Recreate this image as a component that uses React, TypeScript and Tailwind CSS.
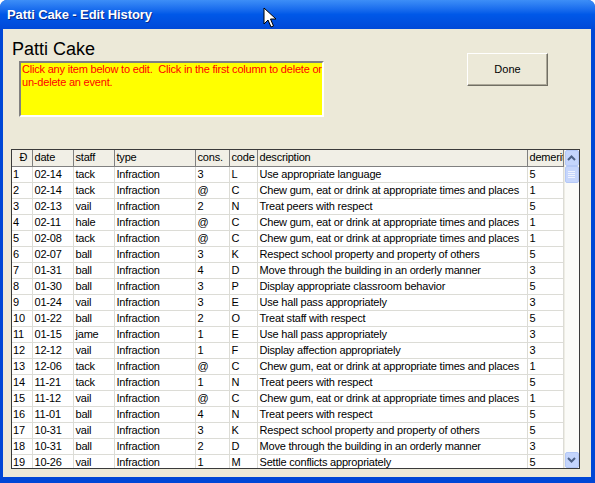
const rows: string[][] = [
  ["1", "02-14", "tack", "Infraction", "3", "L", "Use appropriate language", "5"],
  ["2", "02-14", "tack", "Infraction", "@", "C", "Chew gum, eat or drink at appropriate times and places", "1"],
  ["3", "02-13", "vail", "Infraction", "2", "N", "Treat peers with respect", "5"],
  ["4", "02-11", "hale", "Infraction", "@", "C", "Chew gum, eat or drink at appropriate times and places", "1"],
  ["5", "02-08", "tack", "Infraction", "@", "C", "Chew gum, eat or drink at appropriate times and places", "1"],
  ["6", "02-07", "ball", "Infraction", "3", "K", "Respect school property and property of others", "5"],
  ["7", "01-31", "ball", "Infraction", "4", "D", "Move through the building in an orderly manner", "3"],
  ["8", "01-30", "ball", "Infraction", "3", "P", "Display appropriate classroom behavior", "5"],
  ["9", "01-24", "vail", "Infraction", "3", "E", "Use hall pass appropriately", "3"],
  ["10", "01-22", "ball", "Infraction", "2", "O", "Treat staff with respect", "5"],
  ["11", "01-15", "jame", "Infraction", "1", "E", "Use hall pass appropriately", "3"],
  ["12", "12-12", "vail", "Infraction", "1", "F", "Display affection appropriately", "3"],
  ["13", "12-06", "tack", "Infraction", "@", "C", "Chew gum, eat or drink at appropriate times and places", "1"],
  ["14", "11-21", "tack", "Infraction", "1", "N", "Treat peers with respect", "5"],
  ["15", "11-12", "vail", "Infraction", "@", "C", "Chew gum, eat or drink at appropriate times and places", "1"],
  ["16", "11-01", "ball", "Infraction", "4", "N", "Treat peers with respect", "5"],
  ["17", "10-31", "vail", "Infraction", "3", "K", "Respect school property and property of others", "5"],
  ["18", "10-31", "ball", "Infraction", "2", "D", "Move through the building in an orderly manner", "3"],
  ["19", "10-26", "vail", "Infraction", "1", "M", "Settle conflicts appropriately", "5"],
];

const headers = ["Đ", "date", "staff", "type", "cons.", "code", "description", "demerits"];
const widths = [20, 41, 41, 81, 34, 28, 270, 36];

function Arrow({ down }: { down?: boolean }) {
  return (
    <svg width="9" height="6" viewBox="0 0 9 6" className={down ? "rotate-180" : ""}>
      <path d="M1 5 L4.5 1.5 L8 5" fill="none" stroke="#4d6185" strokeWidth="2" />
    </svg>
  );
}

export default function App() {
  return (
    <div
      className="relative w-[595px] h-[483px] flex flex-col rounded-t-[7px] bg-[#0047d6] overflow-hidden"
      style={{ fontFamily: '"Liberation Sans", Arial, sans-serif' }}
    >
      {/* title bar */}
      <div className="h-[29px] flex items-center pl-[7px] bg-gradient-to-b from-[#3d8ef7] via-[#0058e8] to-[#0049d8]">
        <span className="text-white font-bold text-[13px] tracking-[-0.1px] [text-shadow:1px_1px_0_#0a2a8a]">
          Patti Cake - Edit History
        </span>
      </div>

      {/* cursor */}
      <svg className="absolute left-[263px] top-[7px]" width="14" height="22" viewBox="0 0 14 22">
        <path d="M1 1 L1 17 L5 13 L8 20 L10.5 19 L7.5 12 L13 12 Z" fill="#fff" stroke="#000" strokeWidth="1" />
      </svg>

      {/* body */}
      <div className="flex-1 ml-[3px] mr-[4px] mb-[6px] bg-[#ece9d8] flex flex-col pl-[8px]">
        <div className="flex">
          <div className="flex flex-col">
            <div className="mt-[10px] pl-[1px] text-[18px] leading-[20px] text-black">Patti Cake</div>
            <div className="mt-[2px] ml-[8px] w-[305px] h-[56px] bg-[#ffff00] border-2 border-t-[#808080] border-l-[#808080] border-b-white border-r-white overflow-hidden">
              <div className="pl-[1px] text-[11px] leading-[13px] tracking-[-0.2px] text-[#ff0000] whitespace-nowrap">
                <div>Click any item below to edit.&nbsp; Click in the first column to delete or</div>
                <div>un-delete an event.</div>
              </div>
            </div>
          </div>
          <button className="ml-auto mr-[43px] mt-[24px] w-[81px] h-[33px] bg-[#ece9d8] border border-t-white border-l-white border-b-[#716f64] border-r-[#716f64] shadow-[inset_-1px_-1px_0_#aca899] text-[11px] text-black">
            Done
          </button>
        </div>

        {/* grid */}
        <div className="mt-[32px] w-[569px] h-[320px] border border-[#3a3a3a] bg-white flex overflow-hidden">
          <table className="table-fixed border-collapse w-[551px] text-[11px] tracking-[-0.2px] text-black">
            <colgroup>
              {widths.map((w, i) => (
                <col key={i} style={{ width: w }} />
              ))}
            </colgroup>
            <thead>
              <tr className="h-[16px] bg-[#f1efe6]">
                {headers.map((h, i) => (
                  <th
                    key={h}
                    className={`p-0 font-normal h-[16px] leading-[15px] border-b border-r border-[#808080] whitespace-nowrap overflow-hidden ${
                      i === 0 ? "text-center pl-[3px]" : "text-left pl-[2px]"
                    }`}
                  >
                    {h}
                  </th>
                ))}
              </tr>
            </thead>
            <tbody>
              {rows.map((r) => (
                <tr key={r[0]} className="h-[16px]">
                  {r.map((c, i) => (
                    <td
                      key={i}
                      className={`p-0 h-[16px] leading-[15px] border-b border-r border-[#dcdcd6] whitespace-nowrap overflow-hidden ${
                        i === 0 ? "pl-[1px]" : "pl-[2px]"
                      }`}
                    >
                      {c}
                    </td>
                  ))}
                </tr>
              ))}
            </tbody>
          </table>

          {/* scrollbar */}
          <div className="w-[16px] flex flex-col bg-[#fbfbf8] border-l border-[#eeede5]">
            <div className="h-[16px] flex items-center justify-center rounded-[2px] bg-[#c4d5fc] border border-[#b4c8f6]">
              <Arrow />
            </div>
            <div className="h-[17px] flex flex-col items-center justify-center gap-[1px] rounded-[2px] bg-[#c6d6fc] border border-[#b4c8f6]">
              <div className="w-[7px] h-px bg-[#eef3ff]" />
              <div className="w-[7px] h-px bg-[#eef3ff]" />
              <div className="w-[7px] h-px bg-[#eef3ff]" />
              <div className="w-[7px] h-px bg-[#eef3ff]" />
            </div>
            <div className="flex-1" />
            <div className="h-[16px] flex items-center justify-center rounded-[2px] bg-[#c4d5fc] border border-[#b4c8f6]">
              <Arrow down />
            </div>
          </div>
        </div>
      </div>
    </div>
  );
}
